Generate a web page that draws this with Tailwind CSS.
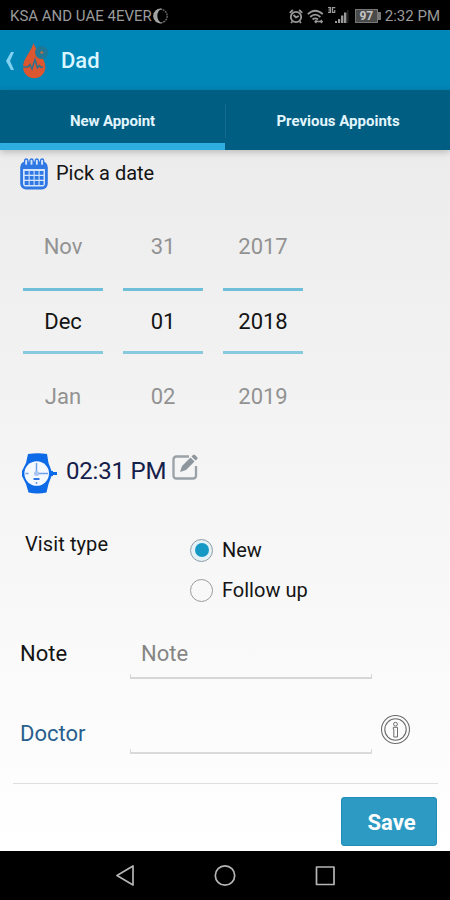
<!DOCTYPE html>
<html lang="en">
<head>
<meta charset="utf-8">
<title>New Appoint</title>
<script src="https://cdn.jsdelivr.net/npm/@tailwindcss/browser@4"></script>
</head>
<body class="w-[450px] h-[900px] overflow-hidden font-[Roboto,sans-serif] text-[20px] leading-6 text-[#141414]">
<div class="flex flex-col w-[450px] h-[900px]">
  <!-- Status bar -->
  <div class="h-[30px] shrink-0 bg-black flex items-center justify-between pl-[10px] pr-[10px] pt-[2px] text-[#9a9a9a] text-[15px]">
    <div class="flex items-center">
      <span class="whitespace-nowrap">KSA AND UAE 4EVER</span>
      <svg class="w-[17px] h-[17px]" viewBox="0 0 17 17"><circle cx="8.5" cy="8" r="6.7" fill="none" stroke="#777" stroke-width="1.2" stroke-dasharray="2 .8"/><path d="M10 .6A7.500 7.500 0 1 0 10 15.400A8.200 8.200 0 0 1 10 .6Z" fill="#a2a2a2"/></svg>
    </div>
    <div class="flex items-center">
      <svg class="w-[14px] h-[15px] mr-[4px]" viewBox="0 0 14 15" fill="none" stroke="#999" stroke-width="1.8"><circle cx="7" cy="8" r="5.2"/><path d="M.8 3.8L3.8 1M13.200 3.800L10.200 1M4.500 6L7 8.500L9.800 7M3.300 12.500L2 14M10.700 12.500L12 14"/></svg>
      <svg class="w-[17px] h-[15px] mr-[4px]" viewBox="0 0 17 15" fill="none" stroke="#999" stroke-width="1.8"><path d="M.8 5.200Q8 -1.800 15.800 5.200M3.200 8Q8.200 3.300 13.400 8M5.600 10.500Q8.200 8.200 11 10.500"/><path d="M8.500 12.500H15M9.500 11L8 12.700L9.500 14M13.800 11L15.300 12.700L13.800 14" stroke-width="1.300"/></svg>
      <svg class="w-[21px] h-[17px] mr-[6px] mb-[2px]" viewBox="0 0 21 17" fill="#999"><path d="M0 0H3V6H0V4.800H1.600V3.600H.3V2.400H1.600V1.200H0ZM3.800 0H7.300V1.200H5.100V4.800H6.100V3H7.300V6H3.800Z"/><path d="M7 14H9V16H7ZM10 12H12.200V16H10ZM13 8.500H15.400V16H13ZM16 5.500H18.400V16H16Z"/><path d="M19.300 3H20.400V16H19.300Z" fill="#333"/></svg>
      <div class="flex items-center mr-[4px]">
        <div class="w-[23px] h-[14px] bg-[#4a4a4a] border border-[#777] flex items-center justify-center text-[12px] leading-none font-bold text-[#c4c4c4]">97</div>
        <div class="w-[3px] h-[8px] bg-[#777]"></div>
      </div>
      <span class="whitespace-nowrap">2:32 PM</span>
    </div>
  </div>
  <!-- App bar -->
  <header class="h-[60px] shrink-0 bg-[#0086b7] flex items-center pl-[5px]">
    <svg class="w-[10px] h-[20px] mt-[1px]" viewBox="0 0 10 20"><path d="M6 1H9L5 10L9 19H6L1 10Z" fill="#80d2f0"/></svg>
    <svg class="w-[28px] h-[36px] ml-[7px] mt-[2px]" viewBox="0 0 28 36"><path d="M11.500 0C10 7 1 16 1 24A11.200 11.200 0 0 0 23.400 24C23.400 15 14 8 11.500 0Z" fill="#dc5630"/><circle cx="19.500" cy="9.500" r="6.500" fill="#1f7896"/><circle cx="19.800" cy="9.500" r="1.500" fill="#a8704f"/><path d="M1 24H6L8 21.500L10 26L13 16.500L15.500 25L17.500 22.500L19 24.500L21 24" fill="none" stroke="#2b7190" stroke-width="1.500"/></svg>
    <h1 class="ml-[11px] mt-[2px] text-[22px] font-medium text-[#dcf6ff]">Dad</h1>
  </header>
  <!-- Tabs -->
  <nav class="h-[60px] shrink-0 bg-[#005e83] grid grid-cols-2 relative z-10 text-[15px] font-bold text-center text-[#e2f5fc] shadow-[0_2px_7px_rgba(0,0,0,0.22)]">
    <div class="h-[60px] pt-[9px] flex items-center justify-center border-b-[7px] border-[#2dade0]"><span class="whitespace-nowrap tracking-[-0.1px]">New Appoint</span></div>
    <div class="flex items-center pt-[2px]">
      <div class="w-px h-[34px] bg-[#176b90]"></div>
      <span class="grow whitespace-nowrap">Previous Appoints</span>
    </div>
  </nav>
  <!-- Form -->
  <main class="h-[701px] shrink-0 bg-linear-to-b from-[#ececec] to-white">
    <div class="flex items-center h-[46px] pl-[20px]">
      <svg class="w-[28px] h-[32px] mt-[1px]" viewBox="0 0 28 32"><rect x="1.600" y="5" width="24.800" height="25" rx="4.500" fill="#d3e4fb" stroke="#2f78e4" stroke-width="2.800"/><path d="M1 11V8Q1 4 5 4H23Q27 4 27 8V11Z" fill="#2f78e4"/><g fill="#d3e4fb" stroke="#2f78e4" stroke-width="1.300"><rect x="4.600" y="1" width="3.200" height="6.500" rx="1.600"/><rect x="9.900" y="1" width="3.200" height="6.500" rx="1.600"/><rect x="15.200" y="1" width="3.200" height="6.500" rx="1.600"/><rect x="20.500" y="1" width="3.200" height="6.500" rx="1.600"/></g><path d="M4.700 14.800H23.500M4.700 19.900H23.500M4.700 25H23.500" stroke="#2f78e4" stroke-width="3.800" stroke-dasharray="3.900 1.070"/></svg>
      <span class="ml-[8px] whitespace-nowrap">Pick a date</span>
    </div>
    <div class="flex gap-[20px] pl-[23px] pt-[10px] text-center text-[22px]">
      <div class="w-[80px]">
        <div class="h-[82px] flex items-center justify-center text-[#929292]">Nov</div>
        <div class="h-[66px] pt-[2px] flex items-center justify-center border-y-[3px] border-t-[#6fbfd9] border-b-[#88c9dd]">Dec</div>
        <div class="h-[86px] flex items-center justify-center text-[#929292]">Jan</div>
      </div>
      <div class="w-[80px]">
        <div class="h-[82px] flex items-center justify-center text-[#929292]">31</div>
        <div class="h-[66px] pt-[2px] flex items-center justify-center border-y-[3px] border-t-[#6fbfd9] border-b-[#88c9dd]">01</div>
        <div class="h-[86px] flex items-center justify-center text-[#929292]">02</div>
      </div>
      <div class="w-[80px]">
        <div class="h-[82px] flex items-center justify-center text-[#929292]">2017</div>
        <div class="h-[66px] pt-[2px] flex items-center justify-center border-y-[3px] border-t-[#6fbfd9] border-b-[#88c9dd]">2018</div>
        <div class="h-[86px] flex items-center justify-center text-[#929292]">2019</div>
      </div>
    </div>
    <div class="flex items-center h-[62px] pl-[21px]">
      <svg class="w-[37px] h-[41px] mt-[4px]" viewBox="0 0 37 41"><path d="M7 1Q17 -.5 26 1L27.500 10L30.500 18V23L27.500 31L25.500 39.500Q17 41.500 7.500 39.500L5 31L1 23V18L5 10ZM30 18H32V19H36V22H32V23H30Z" fill="#0d6be8"/><circle cx="15.700" cy="20.500" r="12.300" fill="#f4f8ff"/><path d="M15.500 10V20.500H25M15.500 31V29M4.500 20.500H7.500M25 20.500H27" stroke="#6d9fea" stroke-width="1.500" fill="none"/><path d="M12.500 25H18.500V27H12.500Z" fill="#2f78e4"/><circle cx="15.500" cy="20.500" r="2.500" fill="#a5c5f4"/></svg>
      <span class="ml-[8px] text-[24px] tracking-[-0.2px] text-[#15204a] whitespace-nowrap">02:31 PM</span>
      <svg class="w-[27px] h-[27px] ml-[6px] mb-[8px]" viewBox="0 0 27 27"><path d="M17 2.500H4.500Q1.500 2.500 1.500 5.500V21.500Q1.500 24.500 4.500 24.500H21Q24 24.500 24 21.500V12" fill="none" stroke="#9aa1a7" stroke-width="2.300"/><path d="M8 18L10 12L18.500 3.500L22.500 7.500L14 16ZM19.500 2.500L21 1Q22 .2 23 1L25.500 3.500Q26 4.500 25 5.300L23.500 6.600Z" fill="#8e969d"/></svg>
    </div>
    <div class="flex h-[114px] pl-[25px] pt-[30px]">
      <div class="w-[165px] tracking-[0.1px]">Visit type</div>
      <div class="flex flex-col gap-[16px] pt-[6px]">
        <div class="flex items-center"><div class="w-[23px] h-[23px] rounded-full border border-[#8f9ba3] bg-[#e4f2f8] flex items-center justify-center"><div class="w-[14px] h-[14px] rounded-full bg-[#1698c5]"></div></div><span class="ml-[9px]">New</span></div>
        <div class="flex items-center"><div class="w-[23px] h-[23px] rounded-full border border-[#9b9b9b]"></div><span class="ml-[9px] whitespace-nowrap">Follow up</span></div>
      </div>
    </div>
    <div class="flex h-[63px] pl-[20px] text-[22px]">
      <div class="w-[110px] pt-[26px]">Note</div>
      <div class="w-[242px] flex flex-col">
        <div class="h-[58px] pt-[26px] pl-[11px] text-[#858585]">Note</div>
        <div class="h-[5px] border border-t-0 border-b-2 border-[#d6d6d6]"></div>
      </div>
    </div>
    <div class="flex h-[104px] pl-[20px] text-[22px]">
      <div class="w-[110px] pt-[43px] text-[#285f8e]">Doctor</div>
      <div class="w-[242px] pt-[70px]"><div class="h-[5px] border border-t-0 border-b-2 border-[#dadada]"></div></div>
      <svg class="w-[30px] h-[30px] ml-[9px] mt-[36px]" viewBox="0 0 30 30" fill="none" stroke="#6d6d6d"><circle cx="14.500" cy="14.500" r="14" stroke-width="1.100"/><circle cx="14.500" cy="14.500" r="10.700" stroke-width="1.100"/><circle cx="14.500" cy="9.200" r="1.900"/><path d="M12.300 12.300H16.500V22H12.800V14H12.300Z"/></svg>
    </div>
    <div class="ml-[13px] w-[425px] h-px bg-[#dedede]"></div>
    <div class="flex justify-end pr-[13px] pt-[13px]">
      <button class="w-[96px] h-[49px] rounded-[3px] bg-[#2c9ac3] border border-[#218db7] text-white font-bold text-[22px] pl-[5px] pt-[2px]">Save</button>
    </div>
  </main>
  <!-- Navigation bar -->
  <footer class="h-[49px] shrink-0 bg-black flex items-start justify-center gap-[78px] pt-[13px]">
    <svg class="w-[22px] h-[23px]" viewBox="0 0 22 23" fill="none" stroke="#b5b5b5" stroke-width="1.700" stroke-linejoin="round"><path d="M3 11.500L19 2V21Z"/></svg>
    <svg class="w-[22px] h-[23px]" viewBox="0 0 22 23" fill="none" stroke="#b5b5b5" stroke-width="1.700"><circle cx="11" cy="11.500" r="9.700"/></svg>
    <svg class="w-[22px] h-[23px]" viewBox="0 0 22 23" fill="none" stroke="#b5b5b5" stroke-width="1.700" stroke-linejoin="round"><rect x="2.500" y="3" width="17.500" height="17.500"/></svg>
  </footer>
</div>
</body>
</html>
